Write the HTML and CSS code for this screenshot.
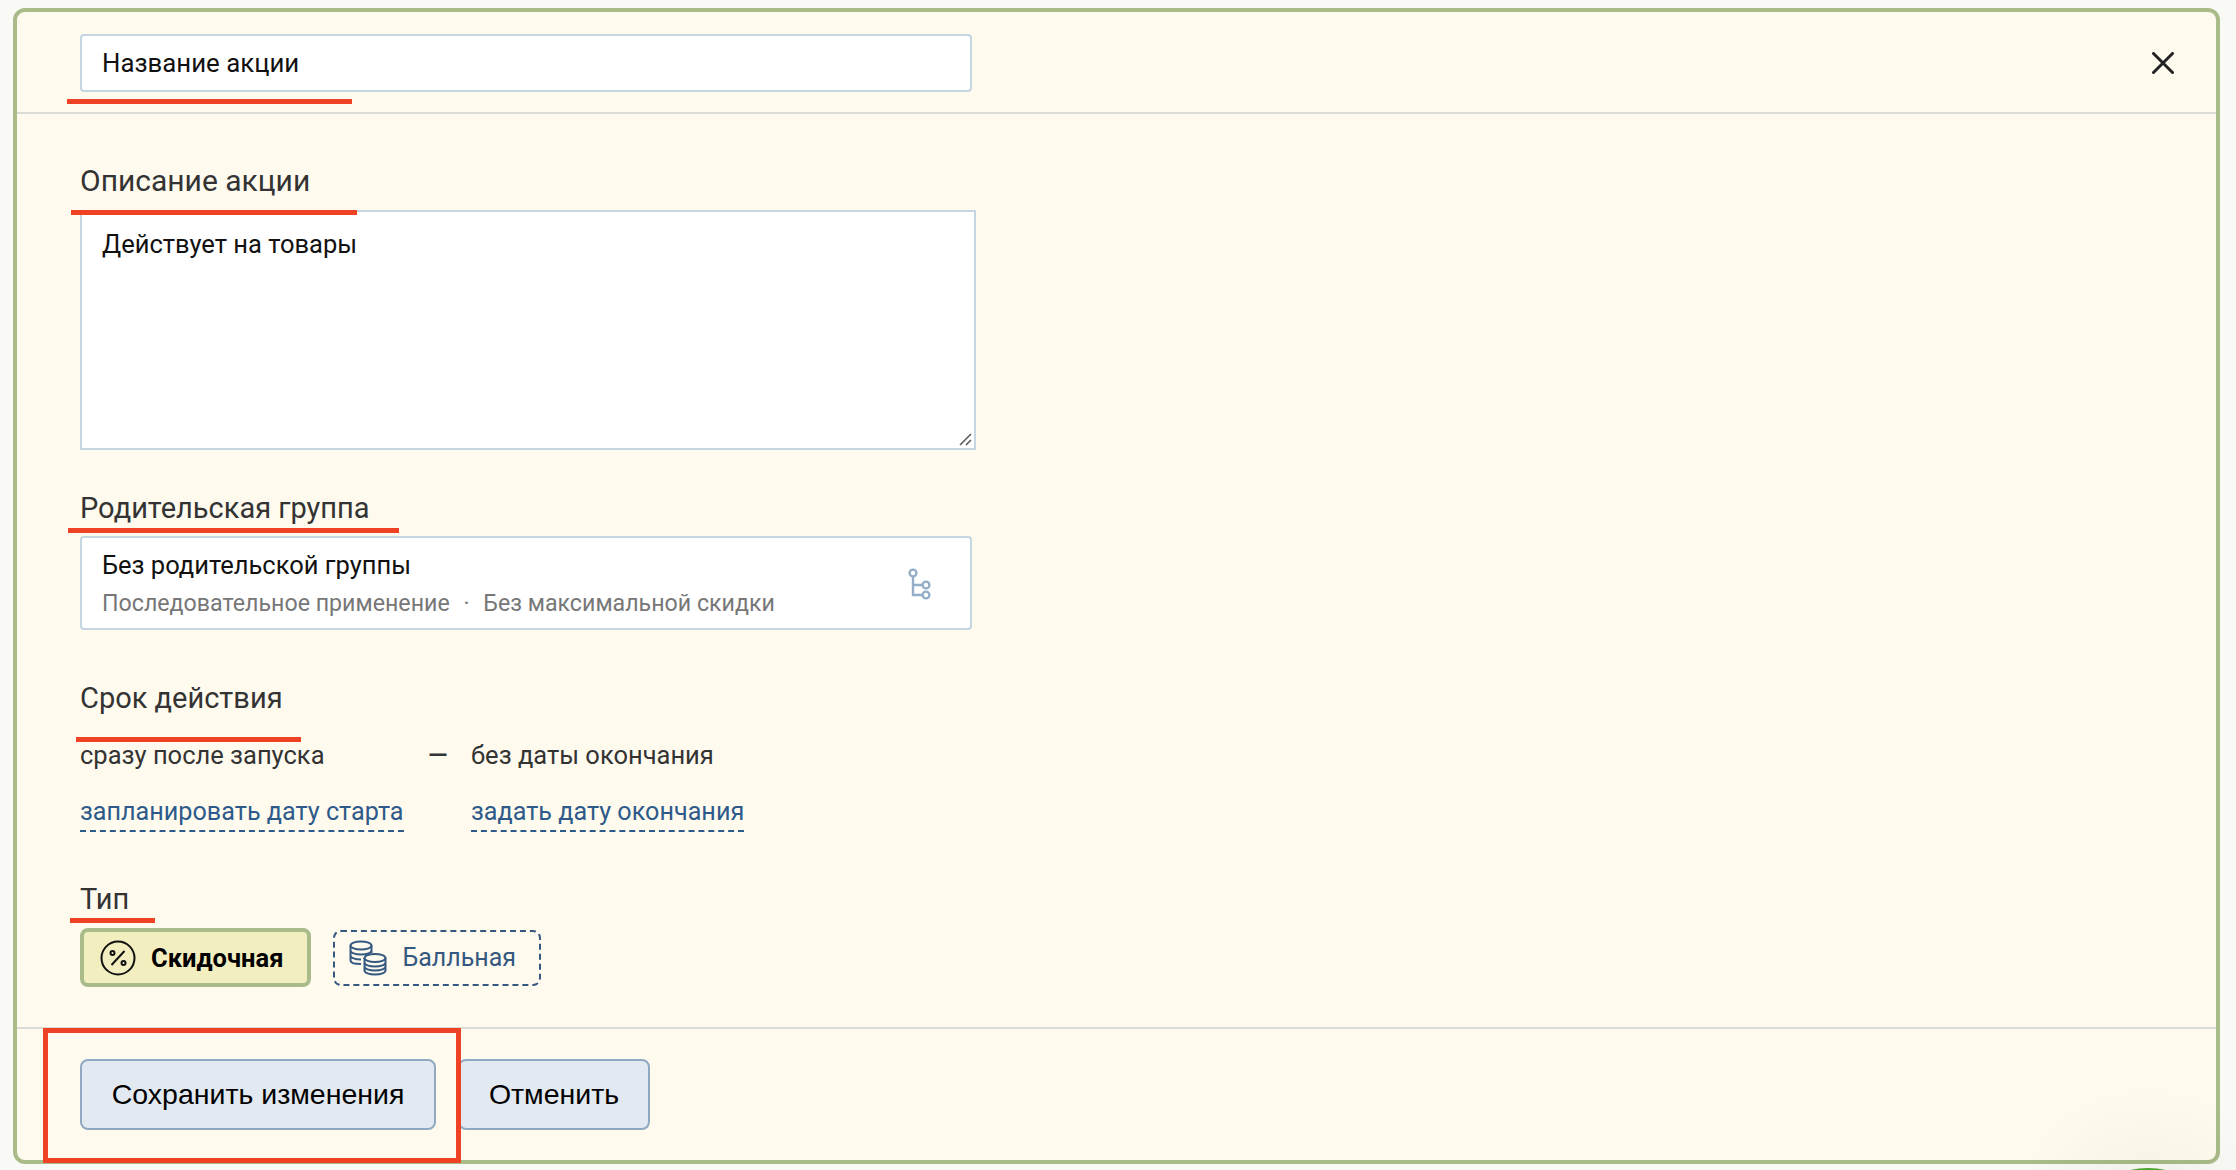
FILE: index.html
```html
<!DOCTYPE html>
<html lang="ru">
<head>
    <meta charset="UTF-8">
    <meta name="viewport" content="width=device-width, initial-scale=1.0">
    <title>Название акции</title>
    <link rel="stylesheet" href="styles.css">
</head>
<body>
    <div class="dialog">
        <div class="dialog-head">
            <div class="title-input">Название акции</div>
            <svg class="close" width="22" height="22" viewBox="0 0 22 22">
                <path d="M1.5 1.5 20.5 20.5M20.5 1.5 1.5 20.5" stroke="#222" stroke-width="3" stroke-linecap="round"/>
            </svg>
        </div>

        <div class="dialog-body">
            <h3 class="label label-desc">Описание акции</h3>
            <div class="textarea">
                Действует на товары
                <svg class="grip" width="14" height="14" viewBox="0 0 14 14">
                    <path d="M2 13 13 2M8 13 13 8" stroke="#555" stroke-width="1.5"/>
                </svg>
            </div>

            <h3 class="label label-parent">Родительская группа</h3>
            <div class="parent-select">
                <div>
                    <div class="parent-name">Без родительской группы</div>
                    <div class="parent-info">Последовательное применение <span class="sep">·</span> Без максимальной скидки</div>
                </div>
                <svg class="tree" width="24" height="32" viewBox="0 0 24 32" fill="none" stroke="#93aec6" stroke-width="2.4">
                    <circle cx="5" cy="5" r="3.4"/>
                    <circle cx="18" cy="17" r="3.4"/>
                    <circle cx="18" cy="27" r="3.4"/>
                    <path d="M5 8.500V27H14.500M5 17H14.500"/>
                </svg>
            </div>

            <h3 class="label label-dates">Срок действия</h3>
            <div class="dates">
                <span>сразу после запуска</span>
                <span class="dash">—</span>
                <span>без даты окончания</span>
                <a class="link" href="#">запланировать дату старта</a>
                <span></span>
                <a class="link" href="#">задать дату окончания</a>
            </div>

            <h3 class="label label-type">Тип</h3>
            <div class="types">
                <div class="type type-active">
                    <svg width="36" height="36" viewBox="0 0 36 36" fill="none" stroke="#111" stroke-width="2">
                        <circle cx="18" cy="18" r="16.500"/>
                        <path d="M11.500 25 24.500 11"/>
                        <circle cx="12.500" cy="13" r="2"/>
                        <circle cx="23.500" cy="23" r="2"/>
                    </svg>
                    Скидочная
                </div>
                <div class="type">
                    <svg width="38" height="36" viewBox="0 0 38 36" fill="none" stroke="#34587f" stroke-width="2">
                        <ellipse cx="12" cy="5.500" rx="10.500" ry="4"/>
                        <path d="M1.500 5.500V20.500C1.500 22.500 5 24 12 24M1.500 10.500C1.500 12.700 6 14.500 12 14.500S22.500 12.700 22.500 10.500M1.500 15.500C1.500 17.700 6 19.500 12 19.500M22.500 5.500V13"/>
                        <ellipse cx="26" cy="18" rx="10.500" ry="4"/>
                        <path d="M15.500 18V30.500C15.500 32.700 20 34.500 26 34.500S36.500 32.700 36.500 30.500V18M15.500 22.500C15.500 24.700 20 26.500 26 26.500S36.500 24.700 36.500 22.500M15.500 26.500C15.500 28.700 20 30.500 26 30.500S36.500 28.700 36.500 26.500"/>
                    </svg>
                    Балльная
                </div>
            </div>
        </div>

        <div class="dialog-foot">
            <button class="btn btn-save">Сохранить изменения</button>
            <button class="btn btn-cancel">Отменить</button>
        </div>
    </div>

    <div class="bubble"></div>

    <!-- red marks drawn over the screenshot -->
    <div class="mark mark-title"></div>
    <div class="mark mark-desc"></div>
    <div class="mark mark-parent"></div>
    <div class="mark mark-dates"></div>
    <div class="mark mark-type"></div>
    <div class="mark-box"></div>
</body>
</html>
```

FILE: styles.css
```css
* {
    box-sizing: border-box;
}
html, body {
    height: 100%;
}
body {
    position: relative;
    margin: 0;
    padding: 8px 16px 6px 13px;
    overflow: hidden;
    background-color: #f9faf5;
    font-family: Roboto, "Noto Sans", Arial, sans-serif;
    font-size: 25.5px;
    color: #111;
}
.dialog {
    display: flex;
    flex-direction: column;
    height: 100%;
    background-color: #fffaee;
    border: 4px solid #a8bb88;
    border-radius: 12px;
}
.dialog-head {
    display: flex;
    justify-content: space-between;
    align-items: center;
    height: 102px;
    padding: 2px 42px 0 63px;
    border-bottom: 2px solid #dcdcd6;
}
.title-input {
    width: 892px;
    height: 58px;
    padding-left: 20px;
    font-size: 25.8px;
    line-height: 54px;
    background-color: #fff;
    border: 2px solid #c6d5e2;
    border-radius: 4px;
}
.dialog-body {
    flex: 1;
    padding: 48px 0 0 63px;
}
.label {
    margin: 0;
    font-size: 29px;
    font-weight: 400;
    line-height: 38px;
    color: #333;
}
.label-desc {
    font-size: 30px;
}
.textarea {
    position: relative;
    width: 896px;
    height: 240px;
    margin-top: 10px;
    padding: 14px 20px;
    line-height: 36px;
    background-color: #fff;
    border: 2px solid #c6d5e2;
}
.grip {
    position: absolute;
    right: 2px;
    bottom: 2px;
}
.label-parent {
    margin-top: 39px;
}
.parent-select {
    display: flex;
    justify-content: space-between;
    align-items: center;
    width: 892px;
    height: 94px;
    margin-top: 9px;
    padding: 2px 38px 0 20px;
    background-color: #fff;
    border: 2px solid #c6d5e2;
    border-radius: 4px;
}
.parent-name {
    line-height: 36px;
}
.parent-info {
    margin-top: 2px;
    font-size: 23.2px;
    line-height: 36px;
    color: #777;
}
.sep {
    margin: 0 8px;
}
.label-dates {
    margin-top: 49px;
}
.dates {
    display: grid;
    grid-template-columns: 348px 43px auto;
    justify-content: start;
    margin-top: 20px;
    line-height: 36px;
    color: #333;
}
.dash {
    font-weight: 500;
}
.link {
    justify-self: start;
    margin-top: 21px;
    font-size: 25.2px;
    color: #2d5a8a;
    text-decoration: none;
    border-bottom: 2px dashed #2d5a8a;
}
.label-type {
    margin-top: 48px;
}
.types {
    display: flex;
    align-items: center;
    gap: 22px;
    margin-top: 10px;
}
.type {
    display: flex;
    align-items: center;
    gap: 15px;
    height: 56px;
    padding: 0 23px 0 14px;
    font-size: 25px;
    color: #34587f;
    border: 2px dashed #34587f;
    border-radius: 8px;
}
.type-active {
    height: 59px;
    padding: 0 24px 0 16px;
    font-size: 25.5px;
    font-weight: 700;
    color: #000;
    background-color: #f3eec0;
    border: 4px solid #a8bb88;
}
.dialog-foot {
    display: flex;
    height: 133px;
    padding: 30px 0 0 63px;
    border-top: 2px solid #dcdcd6;
}
.btn {
    height: 71px;
    font-family: "Liberation Sans", Arial, sans-serif;
    font-size: 28.5px;
    color: #000;
    background-color: #e2e9f0;
    border: 2px solid #8fa9c2;
    border-radius: 8px;
}
.btn-save {
    width: 356px;
}
.btn-cancel {
    width: 192px;
    margin-left: 22px;
}
.bubble {
    position: absolute;
    left: 2098px;
    top: 1168px;
    width: 100px;
    height: 60px;
    background-color: #4fa32f;
    border-radius: 50%;
    box-shadow: 0 0 70px 40px rgba(0, 0, 0, 0.03);
}
.mark {
    position: absolute;
    height: 5px;
    background-color: #ef4123;
}
.mark-title {
    left: 67px;
    top: 99px;
    width: 285px;
}
.mark-desc {
    left: 71px;
    top: 210px;
    width: 286px;
}
.mark-parent {
    left: 68px;
    top: 528px;
    width: 331px;
}
.mark-dates {
    left: 76px;
    top: 737px;
    width: 225px;
}
.mark-type {
    left: 70px;
    top: 918px;
    width: 85px;
}
.mark-box {
    position: absolute;
    left: 43px;
    top: 1028px;
    width: 418px;
    height: 135px;
    border: 5px solid #ef4123;
}
```
